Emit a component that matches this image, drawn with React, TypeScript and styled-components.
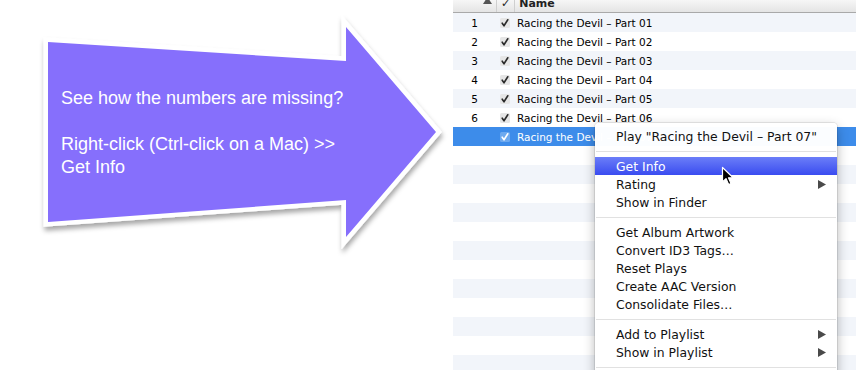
import React from "react";
import styled, { createGlobalStyle } from "styled-components";

const GlobalStyle = createGlobalStyle`
  html, body {
    margin: 0;
    padding: 0;
    background: #fff;
  }
`;

const Page = styled.div`
  display: flex;
  width: 856px;
  height: 370px;
  overflow: hidden;
  background: #fff;
`;

const Callout = styled.div`
  position: relative;
  flex: 0 0 453px;
  height: 370px;
`;

const ArrowShape = styled.svg`
  position: absolute;
  left: 0;
  top: 0;
`;

const CalloutText = styled.div`
  position: relative;
  padding: 87px 0 0 61px;
  font-family: "Liberation Sans", Arial, sans-serif;
  font-size: 18px;
  line-height: 23px;
  color: #fff;
`;

const Para = styled.p`
  margin: 0 0 23px;
`;

const Library = styled.div`
  position: relative;
  flex: 1;
  height: 370px;
  font-family: "DejaVu Sans", Verdana, sans-serif;
  font-size: 10.5px;
  color: #000;
`;

const HeaderRow = styled.div`
  display: flex;
  align-items: flex-end;
  height: 12px;
  overflow: hidden;
  background: linear-gradient(#f6f6f6, #e4e4e4);
  border-bottom: 1px solid #a9a9a9;
`;

const HeadCell = styled.div<{ $w?: number; $align?: string }>`
  display: flex;
  align-items: flex-end;
  justify-content: ${(p) => p.$align || "flex-start"};
  height: 12px;
  ${(p) => (p.$w ? `flex: 0 0 ${p.$w}px;` : "flex: 1;")}
  box-sizing: border-box;
  border-right: 1px solid #cfcfcf;
  font-weight: bold;
  font-size: 11px;
  line-height: 11px;
  color: #222;
  padding: 0 4px 3px;
  &:last-child {
    border-right: none;
  }
`;

const SortMark = styled.svg`
  margin: 0 0 5px;
`;

const Track = styled.div<{ $alt: boolean; $selected?: boolean }>`
  display: flex;
  align-items: center;
  height: 19px;
  background: ${(p) => (p.$selected ? "#3d8cea" : p.$alt ? "#f2f5fa" : "#fff")};
  color: ${(p) => (p.$selected ? "#fff" : "#000")};
`;

const NumCell = styled.div`
  flex: 0 0 44px;
  box-sizing: border-box;
  padding-right: 19px;
  text-align: right;
`;

const CheckCell = styled.div`
  flex: 0 0 16px;
  display: flex;
  justify-content: center;
`;

const NameCell = styled.div`
  flex: 1;
  padding-left: 4px;
  white-space: nowrap;
`;

const Menu = styled.div`
  position: absolute;
  left: 142px;
  top: 123px;
  width: 242px;
  height: 260px;
  padding-top: 4px;
  box-sizing: border-box;
  background: rgba(255, 255, 255, 0.98);
  border-radius: 4px 4px 0 0;
  box-shadow: 0 0 0 1px rgba(0, 0, 0, 0.08), 0 4px 12px rgba(0, 0, 0, 0.3);
  font-family: "DejaVu Sans", Verdana, sans-serif;
  font-size: 12.4px;
  color: #111;
`;

const MenuItem = styled.div<{ $active?: boolean }>`
  display: flex;
  align-items: center;
  justify-content: space-between;
  height: 18px;
  padding: 0 11px 0 21px;
  white-space: nowrap;
  background: ${(p) => (p.$active ? "linear-gradient(#6b7ef8, #3a4cf0)" : "transparent")};
  color: ${(p) => (p.$active ? "#fff" : "#111")};
`;

const Separator = styled.div`
  height: 12px;
  display: flex;
  align-items: center;
  &::after {
    content: "";
    flex: 1;
    height: 1px;
    margin: 0 1px;
    background: #e1e1e1;
  }
`;

const Pointer = styled.svg`
  position: absolute;
  left: 268px;
  top: 166px;
`;

const Check = ({ selected }: { selected?: boolean }) => (
  <svg width="10" height="10" viewBox="0 0 10 10">
    <rect x="0" y="0" width="10" height="10" rx="1.5" fill={selected ? "rgba(255,255,255,0.25)" : "#e6e6e6"} />
    <path
      d="M2.2 5.2 L4 7.8 L7.8 1.8"
      fill="none"
      stroke={selected ? "#fff" : "#2a2a2a"}
      strokeWidth="1.6"
      strokeLinejoin="round"
      strokeLinecap="round"
    />
  </svg>
);

const Submenu = () => (
  <svg width="8" height="9" viewBox="0 0 8 9">
    <polygon points="0,0 8,4.5 0,9" fill="#4a4a4a" />
  </svg>
);

const tracks = [1, 2, 3, 4, 5, 6, 7];

const App: React.FC = () => {
  const blanks = Array.from({ length: 13 }, (_, i) => i + 8);
  return (
    <Page>
      <GlobalStyle />
      <Callout>
        <ArrowShape width="453" height="370" viewBox="0 0 453 370">
          <defs>
            <filter id="shade" x="-10%" y="-10%" width="130%" height="130%">
              <feDropShadow dx="1" dy="4" stdDeviation="2.5" floodColor="#000" floodOpacity="0.35" />
            </filter>
          </defs>
          <polygon
            points="48,42 346,61 346,27 436,132 346,237 346,200 48,222"
            fill="#fff"
            stroke="#fff"
            strokeWidth="9"
            strokeLinejoin="miter"
            filter="url(#shade)"
          />
          <polygon points="48,42 346,61 346,27 436,132 346,237 346,200 48,222" fill="#866ffc" />
        </ArrowShape>
        <CalloutText>
          <Para>See how the numbers are missing?</Para>
          <Para>
            Right-click (Ctrl-click on a Mac) &gt;&gt;
            <br />
            Get Info
          </Para>
        </CalloutText>
      </Callout>
      <Library>
        <HeaderRow>
          <HeadCell $w={44} $align="flex-end">
            <SortMark width="9" height="7" viewBox="0 0 9 7">
              <polygon points="4.5,0 9,7 0,7" fill="#555" />
            </SortMark>
          </HeadCell>
          <HeadCell $w={16} $align="center">
            ✓
          </HeadCell>
          <HeadCell>Name</HeadCell>
        </HeaderRow>
        {tracks.map((n) => (
          <Track key={n} $alt={n % 2 === 1} $selected={n === 7}>
            <NumCell>{n < 7 ? n : ""}</NumCell>
            <CheckCell>
              <Check selected={n === 7} />
            </CheckCell>
            <NameCell>Racing the Devil – Part 0{n}</NameCell>
          </Track>
        ))}
        {blanks.map((n) => (
          <Track key={n} $alt={n % 2 === 1}>
            <NumCell />
          </Track>
        ))}
        <Menu>
          <MenuItem>Play "Racing the Devil – Part 07"</MenuItem>
          <Separator />
          <MenuItem $active>Get Info</MenuItem>
          <MenuItem>
            Rating
            <Submenu />
          </MenuItem>
          <MenuItem>Show in Finder</MenuItem>
          <Separator />
          <MenuItem>Get Album Artwork</MenuItem>
          <MenuItem>Convert ID3 Tags…</MenuItem>
          <MenuItem>Reset Plays</MenuItem>
          <MenuItem>Create AAC Version</MenuItem>
          <MenuItem>Consolidate Files…</MenuItem>
          <Separator />
          <MenuItem>
            Add to Playlist
            <Submenu />
          </MenuItem>
          <MenuItem>
            Show in Playlist
            <Submenu />
          </MenuItem>
          <Separator />
        </Menu>
        <Pointer width="14" height="21" viewBox="0 0 14 21">
          <path
            d="M1.5 1.5 L1.5 16 L5 12.6 L7.6 18.6 L10 17.6 L7.5 11.8 L12.2 11.8 Z"
            fill="#000"
            stroke="#fff"
            strokeWidth="1.2"
            strokeLinejoin="round"
          />
        </Pointer>
      </Library>
    </Page>
  );
};

export default App;
